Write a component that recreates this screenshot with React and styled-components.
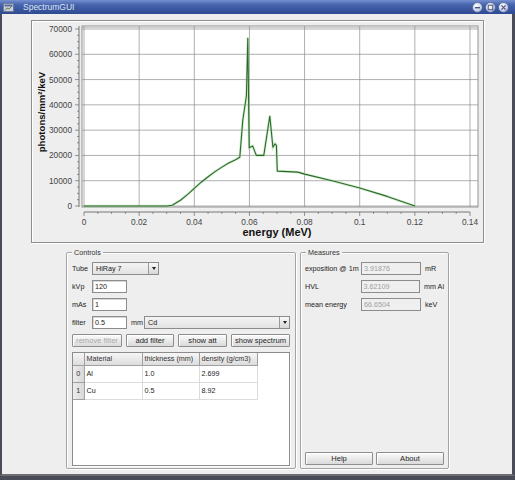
import React from 'react';
import styled, { createGlobalStyle, css } from 'styled-components';

// spectrum points: [energy MeV, photons/mm²/keV]
const spectrum = [
  [0, 0], [0.03, 0], [0.032, 300], [0.035, 2300], [0.0375, 4500], [0.04, 7000],
  [0.0425, 9400], [0.045, 11600], [0.0475, 13600], [0.05, 15400], [0.0525, 17000],
  [0.055, 18300], [0.0565, 19300], [0.0576, 34000], [0.0589, 43500], [0.0594, 66400],
  [0.0599, 23000], [0.0612, 23700], [0.0625, 20000], [0.0652, 20000], [0.0674, 35600],
  [0.0685, 23200], [0.0693, 24600], [0.0698, 24000], [0.0701, 13800], [0.0775, 13400],
  [0.08, 12600], [0.09, 10000], [0.1, 7100], [0.11, 3800], [0.12, 0]
];

const px = (e) => 84 + (e / 0.14) * 386;
const py = (v) => 206 - (v / 70000) * 177;

const GlobalStyle = createGlobalStyle`
  html, body {
    margin: 0;
    padding: 0;
    background: #4a4c58;
  }
  body {
    font-family: "Liberation Sans", Arial, sans-serif;
  }
`;

const Window = styled.div`
  width: 515px;
  height: 476px;
  display: flex;
  flex-direction: column;
`;

const TitleBar = styled.div`
  height: 14px;
  flex-shrink: 0;
  display: flex;
  align-items: center;
  padding: 0 6px 0 3px;
  background: linear-gradient(to bottom, #7690d0 0%, #4563ac 35%, #2f4a92 100%);
  color: #dfe5f4;
  font-size: 8.5px;
`;

const TitleText = styled.span`
  margin-left: 9px;
  flex: 1;
`;

const WinButtons = styled.div`
  display: flex;
  gap: 2px;
`;

const Frame = styled.div`
  flex: 1;
  background: #eeeeee;
  border-left: 2px solid #4b4c5a;
  border-right: 3px solid #4b4c5a;
  border-bottom: 2px solid #6e6e72;
  padding: 6px 0 0 29px;
  display: flex;
  flex-direction: column;
`;

const ChartPanel = styled.div`
  width: 451px;
  height: 221px;
  border: 1px solid #8e8e8e;
  box-shadow: 1px 1px 0 #ffffff, inset 1px 1px 0 #ffffff;
  background: #eeeeee;
`;

const BottomRow = styled.div`
  display: flex;
  gap: 4px;
  margin: 9px 0 0 35px;
`;

const Group = styled.div`
  position: relative;
  width: ${(p) => p.$width}px;
  height: 217px;
  box-sizing: border-box;
  border: 1px solid #a4a4a4;
  border-radius: 2px;
  box-shadow: 1px 1px 0 #ffffff, inset 1px 1px 0 #ffffff;
  padding: 9px ${(p) => p.$padX}px 2px ${(p) => p.$padX}px;
  display: flex;
  flex-direction: column;
  gap: 5px;
`;

const Legend = styled.span`
  position: absolute;
  top: -5px;
  left: 5px;
  padding: 0 2px;
  background: #eeeeee;
  font-size: 7.2px;
  color: #333;
`;

const Row = styled.div`
  display: flex;
  align-items: center;
  height: 13px;
  flex-shrink: 0;
`;

const Label = styled.span`
  width: ${(p) => p.$width}px;
  font-size: 7.2px;
  color: #222;
  white-space: nowrap;
`;

const Unit = styled.span`
  margin-left: 4px;
  font-size: 7.2px;
  color: #222;
  white-space: nowrap;
  ${(p) => p.$fixed && css`
    width: 13px;
  `}
`;

const Field = styled.div`
  width: ${(p) => p.$width}px;
  height: 13px;
  box-sizing: border-box;
  border: 1px solid #8c8c8c;
  background: ${(p) => (p.$disabled ? '#efefef' : '#ffffff')};
  color: ${(p) => (p.$disabled ? '#a0a0a0' : '#222')};
  font-size: 7.2px;
  line-height: 11px;
  padding-left: 2px;
  box-shadow: ${(p) => (p.$disabled ? 'none' : 'inset 1px 1px 0 #d8d8d8')};
`;

const Combo = styled.div`
  display: flex;
  height: 13px;
  box-sizing: border-box;
  border: 1px solid #8c8c8c;
  background: linear-gradient(to bottom, #f4f4f4, #e2e2e2);
  font-size: 7.2px;
  color: #222;
  ${(p) => (p.$width ? css`width: ${p.$width}px;` : css`flex: 1;`)}
`;

const ComboText = styled.span`
  flex: 1;
  line-height: 11px;
  padding-left: 3px;
`;

const ComboArrow = styled.span`
  width: 9px;
  border-left: 1px solid #9a9a9a;
  display: flex;
  align-items: center;
  justify-content: center;
  background: linear-gradient(to bottom, #fafafa, #d6d6d6);
  &::after {
    content: '';
    border-left: 2.5px solid transparent;
    border-right: 2.5px solid transparent;
    border-top: 3px solid #222;
  }
`;

const ButtonRow = styled.div`
  display: flex;
  gap: ${(p) => p.$gap}px;
  height: 13px;
  flex-shrink: 0;
  ${(p) => p.$bottom && css`
    margin-top: auto;
    margin-bottom: 1px;
  `}
`;

const Button = styled.button`
  width: ${(p) => p.$width}px;
  height: 13px;
  padding: 0;
  margin: 0;
  border: 1px solid #8e8e8e;
  border-radius: 1px;
  background: linear-gradient(to bottom, #fbfbfb, #dadada);
  font-family: "Liberation Sans", Arial, sans-serif;
  font-size: 7.6px;
  color: ${(p) => (p.disabled ? '#a8a8a8' : '#1e1e1e')};
  box-shadow: inset 1px 1px 0 #ffffff;
`;

const TableScroll = styled.div`
  flex: 1;
  border: 1px solid #8c8c8c;
  background: #ffffff;
  box-shadow: 1px 1px 0 #ffffff;
`;

const Table = styled.table`
  border-collapse: collapse;
  table-layout: fixed;
  font-size: 7.2px;
  color: #222;
`;

const HeadCell = styled.th`
  width: ${(p) => p.$width}px;
  height: 12px;
  box-sizing: border-box;
  padding: 0 0 0 2px;
  text-align: left;
  font-weight: normal;
  color: #333;
  background: linear-gradient(to bottom, #f6f6f6, #dcdcdc);
  border-right: 1px solid #a0a0a0;
  border-bottom: 1px solid #a0a0a0;
  white-space: nowrap;
  overflow: hidden;
`;

const RowHead = styled.td`
  height: 17px;
  box-sizing: border-box;
  padding: 0;
  text-align: center;
  background: linear-gradient(to right, #ececec, #d8d8d8);
  border-right: 1px solid #a0a0a0;
  border-bottom: 1px solid #a0a0a0;
  color: #333;
`;

const Cell = styled.td`
  height: 17px;
  box-sizing: border-box;
  padding: 0 0 0 2px;
  border-right: 1px solid #dcdcdc;
  border-bottom: 1px solid #dcdcdc;
  white-space: nowrap;
`;

const filters = [
  { material: 'Al', thickness: '1.0', density: '2.699' },
  { material: 'Cu', thickness: '0.5', density: '8.92' }
];

const measures = [
  { label: 'exposition @ 1m', value: '3.91876', unit: 'mR' },
  { label: 'HVL', value: '3.62109', unit: 'mm Al' },
  { label: 'mean energy', value: '66.6504', unit: 'keV' }
];

function WinButton({ kind }) {
  return (
    <svg width="11" height="11" viewBox="0 0 11 11">
      <defs>
        <radialGradient id={`g-${kind}`} cx="40%" cy="35%" r="65%">
          <stop offset="0%" stopColor="#ffffff" />
          <stop offset="70%" stopColor="#c9d3ea" />
          <stop offset="100%" stopColor="#8ea0cc" />
        </radialGradient>
      </defs>
      <circle cx="5.5" cy="5.5" r="5" fill={`url(#g-${kind})`} stroke="#3c528c" strokeWidth="0.6" />
      {kind === 'min' && <rect x="3" y="5" width="5" height="1.4" fill="#4a5478" />}
      {kind === 'max' && <rect x="3.2" y="3.2" width="4.6" height="4.6" fill="none" stroke="#4a5478" strokeWidth="1" />}
      {kind === 'close' && (
        <path d="M3.4 3.4 L7.6 7.6 M7.6 3.4 L3.4 7.6" stroke="#4a5478" strokeWidth="1.2" />
      )}
    </svg>
  );
}

function AppIcon() {
  return (
    <svg width="11" height="11" viewBox="0 0 11 11">
      <rect x="0.5" y="1.5" width="10" height="8" fill="#c9ccd6" stroke="#6a6e80" strokeWidth="0.6" />
      <rect x="1.5" y="2.5" width="8" height="2" fill="#5a6fa8" />
      <path d="M2 8.5 L4 6 L6 7 L9 4" fill="none" stroke="#2f6a2f" strokeWidth="0.7" />
    </svg>
  );
}

function Chart() {
  const xTicks = [0, 0.02, 0.04, 0.06, 0.08, 0.1, 0.12, 0.14];
  const xLabels = ['0', '0.02', '0.04', '0.06', '0.08', '0.1', '0.12', '0.14'];
  const yTicks = [0, 10000, 20000, 30000, 40000, 50000, 60000, 70000];
  const xMinor = [];
  for (let i = 0; i <= 28; i++) xMinor.push(i * 0.005);
  const yMinor = [];
  for (let v = 0; v <= 70000; v += 2500) yMinor.push(v);
  const line = spectrum.map(([e, v]) => `${px(e).toFixed(1)},${py(v).toFixed(1)}`).join(' ');

  return (
    <svg width="451" height="221" viewBox="32 21 451 221" style={{ display: 'block' }}>
      <rect x="82" y="26" width="396" height="181" fill="#ffffff" stroke="#7a7a7a" strokeWidth="0.8" />
      <line x1="82" y1="27.5" x2="478" y2="27.5" stroke="#b0b0b0" strokeWidth="0.6" />
      {xTicks.map((e) => (
        <line key={`gx${e}`} x1={px(e)} y1="26" x2={px(e)} y2="207" stroke="#8c8c8c" strokeWidth="0.7" />
      ))}
      {yTicks.map((v) => (
        <line key={`gy${v}`} x1="82" y1={py(v)} x2="478" y2={py(v)} stroke="#8c8c8c" strokeWidth="0.7" />
      ))}

      <line x1="79" y1="26" x2="79" y2="207" stroke="#555" strokeWidth="0.8" />
      {yMinor.map((v) => (
        <line key={`ym${v}`} x1={v % 10000 === 0 ? 75 : 77} y1={py(v)} x2="79" y2={py(v)} stroke="#555" strokeWidth="0.6" />
      ))}
      {yTicks.map((v) => (
        <text key={`yl${v}`} x="72" y={py(v) + 3} textAnchor="end" fontSize="8.3" fill="#444"
          fontFamily='"Liberation Sans", Arial, sans-serif'>{v}</text>
      ))}

      <line x1={px(0)} y1="212" x2={px(0.14)} y2="212" stroke="#555" strokeWidth="0.8" />
      {xMinor.map((e, i) => (
        <line key={`xm${i}`} x1={px(e)} y1="212" x2={px(e)} y2={i % 4 === 0 ? 216 : 214} stroke="#555" strokeWidth="0.6" />
      ))}
      {xTicks.map((e, i) => (
        <text key={`xl${e}`} x={px(e)} y="225" textAnchor="middle" fontSize="8.3" fill="#444"
          fontFamily='"Liberation Sans", Arial, sans-serif'>{xLabels[i]}</text>
      ))}

      <polyline points={line} fill="none" stroke="#a8dca0" strokeWidth="2.6" strokeOpacity="0.55" />
      <polyline points={line} fill="none" stroke="#2c682c" strokeWidth="1.1" strokeLinejoin="round" />

      <text x="277" y="236" textAnchor="middle" fontSize="11" fontWeight="bold" fill="#111"
        fontFamily='"Liberation Sans", Arial, sans-serif'>energy (MeV)</text>
      <text x="0" y="0" transform="translate(45 112) rotate(-90)" textAnchor="middle" fontSize="9.6"
        fontWeight="bold" fill="#111" fontFamily='"Liberation Sans", Arial, sans-serif'>photons/mm²/keV</text>
    </svg>
  );
}

export default function App() {
  return (
    <>
      <GlobalStyle />
      <Window>
        <TitleBar>
          <AppIcon />
          <TitleText>SpectrumGUI</TitleText>
          <WinButtons>
            <WinButton kind="min" />
            <WinButton kind="max" />
            <WinButton kind="close" />
          </WinButtons>
        </TitleBar>
        <Frame>
          <ChartPanel>
            <Chart />
          </ChartPanel>
          <BottomRow>
            <Group $width={230} $padX={5}>
              <Legend>Controls</Legend>
              <Row>
                <Label $width={20}>Tube</Label>
                <Combo $width={67}>
                  <ComboText>HiRay 7</ComboText>
                  <ComboArrow />
                </Combo>
              </Row>
              <Row>
                <Label $width={20}>kVp</Label>
                <Field $width={35}>120</Field>
              </Row>
              <Row>
                <Label $width={20}>mAs</Label>
                <Field $width={35}>1</Field>
              </Row>
              <Row>
                <Label $width={20}>filter</Label>
                <Field $width={35}>0.5</Field>
                <Unit $fixed>mm</Unit>
                <Combo>
                  <ComboText>Cd</ComboText>
                  <ComboArrow />
                </Combo>
              </Row>
              <ButtonRow $gap={4}>
                <Button $width={50} disabled>remove filter</Button>
                <Button $width={48}>add filter</Button>
                <Button $width={49}>show att</Button>
                <Button $width={59}>show spectrum</Button>
              </ButtonRow>
              <TableScroll>
                <Table>
                  <thead>
                    <tr>
                      <HeadCell $width={11} />
                      <HeadCell $width={58}>Material</HeadCell>
                      <HeadCell $width={57}>thickness (mm)</HeadCell>
                      <HeadCell $width={58}>density (g/cm3)</HeadCell>
                    </tr>
                  </thead>
                  <tbody>
                    {filters.map((f, i) => (
                      <tr key={f.material}>
                        <RowHead>{i}</RowHead>
                        <Cell>{f.material}</Cell>
                        <Cell>{f.thickness}</Cell>
                        <Cell>{f.density}</Cell>
                      </tr>
                    ))}
                  </tbody>
                </Table>
              </TableScroll>
            </Group>
            <Group $width={149} $padX={4}>
              <Legend>Measures</Legend>
              {measures.map((m) => (
                <Row key={m.label}>
                  <Label $width={56}>{m.label}</Label>
                  <Field $width={60} $disabled>{m.value}</Field>
                  <Unit>{m.unit}</Unit>
                </Row>
              ))}
              <ButtonRow $gap={3} $bottom>
                <Button $width={68}>Help</Button>
                <Button $width={68}>About</Button>
              </ButtonRow>
            </Group>
          </BottomRow>
        </Frame>
      </Window>
    </>
  );
}
